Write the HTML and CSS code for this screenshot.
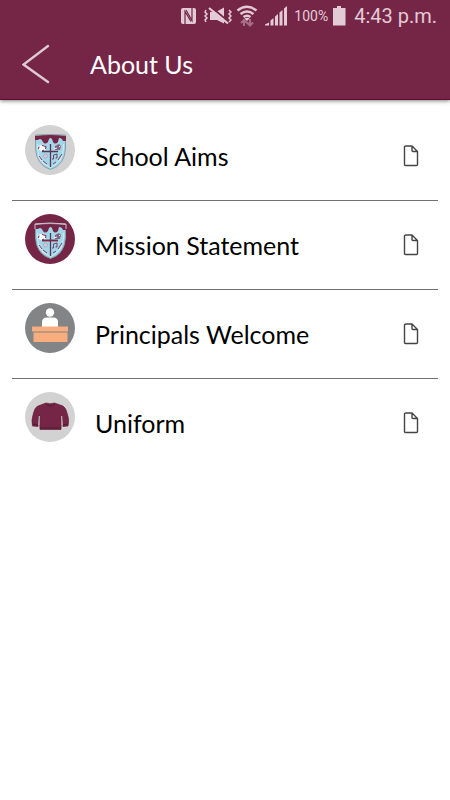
FILE: index.html
```html
<!DOCTYPE html>
<html lang="en">
<head>
<meta charset="utf-8">
<meta name="viewport" content="width=device-width, initial-scale=1">
<title>About Us</title>
<link rel="stylesheet" href="styles.css">
</head>
<body>
<header class="header">
  <div class="status">
    <svg width="22" height="20" viewBox="0 0 22 20" aria-hidden="true">
      <rect x="3" y="2" width="15" height="16" rx="2" fill="currentColor"/>
      <path fill="none" stroke="#752647" stroke-width="1.200" d="M7 18V5.500L13 15.500M8 4 14 14.500V2"/>
    </svg>
    <svg width="28" height="20" viewBox="0 0 28 20" aria-hidden="true">
      <path fill="currentColor" d="M6 6H12L20 1.500V17.500L13 14H6Z"/>
      <path fill="none" stroke="#752647" stroke-width="2" d="M7 1 25 16"/>
      <path fill="none" stroke="currentColor" stroke-width="2.200" d="M5 2 24 17.500"/>
      <path fill="none" stroke="currentColor" stroke-width="1.500" d="M2 4 1 6 3 8 1 10 3 12 1 14 2 16M25 4 27 6 25 8 27 10 25 12 27 14 25 16"/>
    </svg>
    <svg width="24" height="24" viewBox="0 0 24 24" aria-hidden="true">
      <path fill="none" stroke="currentColor" stroke-width="2.400" d="M1.500 6.500Q11-1 20.500 6.500M4.500 10Q11 5 17.500 10M7.500 13Q11 10.500 14.500 13"/>
      <path fill="currentColor" d="M8.500 14.500Q11 13 13.500 14.500L11 17Z"/>
      <path fill="none" stroke="#a66e87" stroke-width="2" d="M8 22V16M5 19 8 16 11 19M14 15V21M11 18.500 14 21.500 17 18.500"/>
    </svg>
    <svg width="26" height="20" viewBox="0 0 26 20" aria-hidden="true">
      <path fill="currentColor" d="M1 18.500 5 16.500V19.500H1ZM6.500 14.500 9.500 12V19.500H6.500ZM11 10.500 14 8V19.500H11ZM15.500 6.500 18.500 4V19.500H15.500ZM20 2.500 23 0V19.500H20Z"/>
    </svg>
    <span class="charge">100%</span>
    <svg width="14" height="20" viewBox="0 0 14 20" aria-hidden="true">
      <path fill="currentColor" d="M5 0H9V2H13.500V19.500H1V2H5Z"/>
    </svg>
    <time class="clock">4:43 p.m.</time>
  </div>
  <div class="bar">
    <button class="back" type="button" aria-label="Back">
      <svg width="28" height="40" viewBox="0 0 28 40" aria-hidden="true">
        <path fill="none" stroke="#dfc9d3" stroke-width="2.400" stroke-linecap="round" d="M26 2 1.500 20.500 26 38"/>
      </svg>
    </button>
    <h1 class="title">About Us</h1>
  </div>
</header>
<svg class="symbols" aria-hidden="true">
  <symbol id="crest" viewBox="0 0 50 50">
    <path fill="#a4d6e9" stroke="#8b9fab" d="M10.500 10Q25 9 40.500 10V23Q40 40 25.500 44.500Q11 40 10.500 23Z"/>
    <path fill="none" stroke="#c2edf5" d="M12.500 19V23Q13 37 25.500 42.500Q38 37 38.500 23V19"/>
    <path fill="#752647" d="M10 11Q25 9 41 11V16H38Q37 13 34 13L33 17Q30 20 28 17Q27 13 25.500 13Q24 13 23 17Q20 20 18 17Q16 12 13 15H10Z"/>
    <path fill="#fff" d="M13 21Q17 19 21 21V24Q19 27 16 26Q13 25 13 21Z"/>
    <path fill="none" stroke="#752647" d="M13.500 24 14 21.500M17 20.500 21 21.500 20.500 24M17 26 19 25"/>
    <path fill="#836283" d="M30 21 34 19 36 21 35 25H30Z"/>
    <path fill="none" stroke="#eee" d="M29 24 32 23M34 21 35 22"/>
    <path fill="none" stroke="#553752" stroke-width="1.300" d="M25.500 19V42M17 26.500H33"/>
    <circle cx="20.500" cy="31" r="2" fill="#d9c8da" stroke="#a997b4" stroke-width=".6"/>
    <path fill="none" stroke="#683450" stroke-width=".9" d="M28.500 34V30L32 29V33M27 34H28.500M30.500 33H32M14 31 17 35M18 36 22 39M28 39 31 37M33 35 37 29"/>
    <path fill="none" stroke="#f7dce3" d="M13 31 16 36M17 37 21 40M34 36 37 32"/>
  </symbol>
  <symbol id="page" viewBox="0 0 18 24">
    <path fill="#fff" stroke="#444" stroke-width="1.400" stroke-linejoin="round" d="M4 2H10L15.500 7.500V20.500Q15.500 21.500 14.500 21.500H3.500Q2.500 21.500 2.500 20.500V3Q2.500 2 4 2ZM10 2V6.500Q10 7.500 11 7.500H15.500"/>
  </symbol>
</svg>
<main>
  <ul class="list">
    <li class="item"><a class="row" href="#aims">
      <svg class="badge silver" viewBox="0 0 50 50" aria-hidden="true"><use href="#crest"/></svg>
      <span class="label">School Aims</span>
      <svg class="page" aria-hidden="true"><use href="#page"/></svg>
    </a></li>
    <li class="item"><a class="row" href="#mission">
      <svg class="badge maroon" viewBox="0 0 50 50" aria-hidden="true">
        <use href="#crest"/>
        <path fill="none" stroke="#d4bec9" d="M10 15V10Q25 8 41 10V15"/>
        <path fill="none" stroke="#842746" stroke-width="1.500" d="M17 26.500H33"/>
      </svg>
      <span class="label">Mission Statement</span>
      <svg class="page" aria-hidden="true"><use href="#page"/></svg>
    </a></li>
    <li class="item"><a class="row" href="#welcome">
      <svg class="badge grey" viewBox="0 0 50 50" aria-hidden="true">
        <circle cx="25" cy="9.500" r="4.200" fill="#fff"/>
        <path fill="#fff" d="M17 24V19Q17 14.500 22 14.500H28Q33 14.500 33 19V24Z"/>
        <rect x="7" y="23.500" width="36" height="5" rx=".5" fill="#f7ad7e"/>
        <rect x="8.500" y="29.500" width="34" height="9.500" rx=".5" fill="#f7ad7e"/>
      </svg>
      <span class="label">Principals Welcome</span>
      <svg class="page" aria-hidden="true"><use href="#page"/></svg>
    </a></li>
    <li class="item"><a class="row" href="#uniform">
      <svg class="badge silver" viewBox="0 0 50 50" aria-hidden="true">
        <path fill="#752647" stroke="#622039" stroke-width=".7" d="M21 11Q25 12.500 29.500 11L38 14Q41 16 42 21Q44 27 43.500 30L43 34 38 34.500 36.500 23 36 37.500H15L14.500 23 13 34.500 7.500 34Q6 29 8.500 21Q10 15 13 14Z"/>
        <path fill="none" stroke="#d2d2d2" d="M13.800 33 14.300 24M37.200 33 36.700 24"/>
        <path fill="none" stroke="#531a30" d="M21 12Q25 16 30 12M15 36H36M8 32 13 33M38 33 43 32"/>
      </svg>
      <span class="label">Uniform</span>
      <svg class="page" aria-hidden="true"><use href="#page"/></svg>
    </a></li>
  </ul>
</main>
</body>
</html>
```
FILE: styles.css
```css
* {
  box-sizing: border-box;
}

body {
  margin: 0;
  background: #fff;
  color: #000;
  font-family: Lato, "Liberation Sans", sans-serif;
}

.header {
  background: #752647;
  border-bottom: 1px solid #5f0b30;
  box-shadow: 0 1px 4px rgba(0, 0, 0, 0.5);
}

.status {
  display: flex;
  align-items: center;
  justify-content: flex-end;
  gap: 4px;
  height: 31px;
  padding-right: 13px;
  color: #e3cbd6;
  font-family: Roboto, sans-serif;
  white-space: nowrap;
}

.status svg {
  flex: none;
}

.charge {
  font-size: 14px;
}

.clock {
  margin-left: 4px;
  font-size: 20px;
}

.bar {
  display: flex;
  align-items: center;
  gap: 40px;
  height: 68px;
  padding: 0 22px 2px;
}

.back {
  display: flex;
  padding: 0;
  border: 0;
  background: none;
}

.title {
  margin: 0;
  color: #fff;
  font-size: 25px;
  font-weight: 400;
}

.symbols {
  position: absolute;
  width: 0;
  height: 0;
}

.list {
  margin: 0;
  padding: 12px;
  list-style: none;
}

.item + .item {
  border-top: 1px solid #707070;
}

.row {
  display: flex;
  align-items: center;
  height: 88px;
  padding: 0 18px 0 13px;
  color: inherit;
  font-size: 25px;
  text-decoration: none;
}

.badge {
  flex: none;
  align-self: flex-start;
  width: 50px;
  height: 50px;
  margin-top: 13px;
  border-radius: 50%;
}

.silver {
  background: #d2d2d2;
}

.maroon {
  background: #752647;
}

.grey {
  background: #828485;
}

.label {
  flex: 1;
  margin-left: 20px;
}

.page {
  flex: none;
  width: 18px;
  height: 24px;
}
```
